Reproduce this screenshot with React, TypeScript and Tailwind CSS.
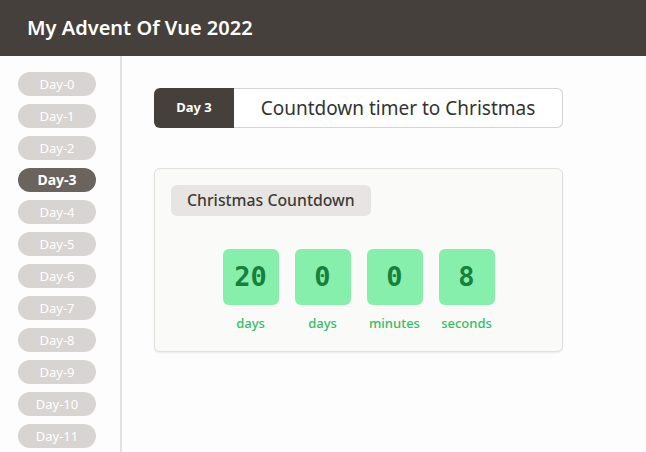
const DAYS = Array.from({ length: 12 }, (_, i) => `Day-${i}`);

const UNITS = [
  { value: 20, label: "days" },
  { value: 0, label: "days" },
  { value: 0, label: "minutes" },
  { value: 8, label: "seconds" },
];

function Sidebar() {
  return (
    <aside className="w-[122px] shrink-0 border-r-2 border-[#e4e2e0] pt-4 flex flex-col items-start pl-[18px] gap-2 overflow-hidden">
      {DAYS.map((day, i) => (
        <div
          key={day}
          className={
            i === 3
              ? "w-[78px] h-6 shrink-0 rounded-full bg-[#6b645e] text-white font-bold text-[14px] leading-6 text-center"
              : "w-[78px] h-6 shrink-0 rounded-full bg-[#d8d4d1] text-white text-[13px] leading-6 text-center"
          }
        >
          {day}
        </div>
      ))}
    </aside>
  );
}

function Countdown() {
  return (
    <div className="w-[409px] mt-10 rounded-md border border-[#e2e0de] bg-[#fafaf9] shadow-[0_1px_2px_rgba(0,0,0,0.08)] pt-4 pb-[17px] px-4">
      <div className="inline-block rounded-md bg-[#e7e5e3] px-4 h-[31px] leading-[31px] text-[15.8px] font-medium text-[#3f3a36]">
        Christmas Countdown
      </div>
      <div className="flex justify-center gap-4 mt-[33px]">
        {UNITS.map((u, i) => (
          <div key={i} className="flex flex-col items-center">
            <div className="w-14 h-14 rounded-md bg-[#86efac] flex items-center justify-center text-[27px] font-bold text-[#17803d] font-['DejaVu_Sans_Mono',monospace]">
              {u.value}
            </div>
            <span className="mt-[9px] text-[13px] font-medium text-[#32bf62]">{u.label}</span>
          </div>
        ))}
      </div>
    </div>
  );
}

export default function App() {
  return (
    <div className="w-[646px] h-[452px] flex flex-col bg-white font-['Noto_Sans',sans-serif] overflow-hidden">
      <header className="h-14 shrink-0 bg-[#45403b] flex items-center px-[27px]">
        <h1 className="text-[20px] font-semibold text-white">My Advent Of Vue 2022</h1>
      </header>
      <div className="flex flex-1 min-h-0 bg-[#fdfdfd]">
        <Sidebar />
        <main className="flex-1 pt-8 pl-8">
          <div className="flex w-[409px] h-10">
            <div className="w-20 rounded-l-md bg-[#45403b] text-white text-[13px] font-bold flex items-center justify-center">
              Day 3
            </div>
            <div className="flex-1 rounded-r-md border border-l-0 border-[#d6d3d1] bg-white flex items-center justify-center text-[19px] text-[#333]">
              Countdown timer to Christmas
            </div>
          </div>
          <Countdown />
        </main>
      </div>
    </div>
  );
}
